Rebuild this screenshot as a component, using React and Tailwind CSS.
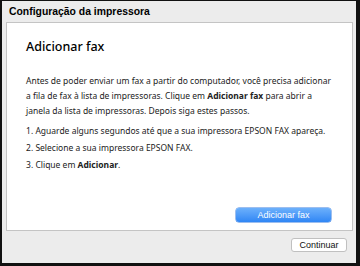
const body = { fontFamily: '"Noto Sans", "DejaVu Sans", sans-serif' };
const ui = { fontFamily: '"Liberation Sans", Arial, sans-serif' };

const steps = [
  <>Aguarde alguns segundos até que a sua impressora EPSON FAX apareça.</>,
  <>Selecione a sua impressora EPSON FAX.</>,
  <>Clique em <b className="font-bold">Adicionar</b>.</>,
];

export default function App() {
  return (
    <div className="h-[266px] w-[360px] bg-[#111] pb-[3px] pl-[2px] pr-[4px] pt-px">
      <div className="flex h-full flex-col bg-[#ececec] pl-[4px] pr-[3px]">
        <div className="flex h-[21px] items-center pl-[3px] text-[10.4px] font-bold text-black" style={ui}>
          Configuração da impressora
        </div>
        <div className="flex h-[209px] flex-col border border-[#c4c4c4] bg-white pl-[19px] pr-[15px]" style={body}>
          <h1 className="mt-[15px] text-[12.5px] font-medium leading-[18px] text-black">Adicionar fax</h1>
          <p className="mt-[17px] text-[8.5px] leading-[15px] text-[#222]">
            Antes de poder enviar um fax a partir do computador, você precisa adicionar a fila de fax à lista de impressoras. Clique em <b className="font-bold">Adicionar fax</b> para abrir a janela da lista de impressoras. Depois siga estes passos.
          </p>
          <ol className="mt-[4px] text-[8.5px] leading-[17px] text-[#222]">
            {steps.map((s, i) => (
              <li key={i}>{i + 1}. {s}</li>
            ))}
          </ol>
          <div className="mb-[8px] mr-[6px] mt-auto flex justify-end">
            <button className="h-[14px] w-[95px] rounded-[3px] bg-gradient-to-b from-[#6cb0fb] to-[#2f86f5] text-[9px] leading-[14px] text-white shadow-[0_0_0_0.5px_#3a7fe0]" style={ui}>
              Adicionar fax
            </button>
          </div>
        </div>
        <div className="flex flex-1 justify-end pr-[6px] pt-[7px]">
          <button className="h-[14px] w-[56px] rounded-[3px] border border-[#c0c0c0] bg-white text-[9px] leading-[12px] text-[#111]" style={ui}>
            Continuar
          </button>
        </div>
      </div>
    </div>
  );
}
